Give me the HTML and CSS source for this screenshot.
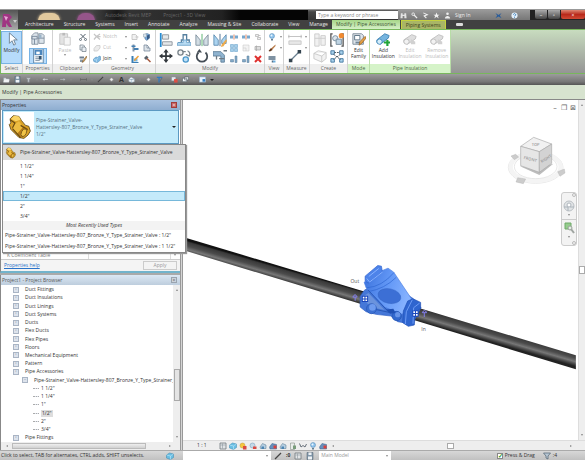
FILE: index.html
```html
<!DOCTYPE html>
<html lang="en">
<head>
<meta charset="utf-8">
<title>Project1 - Modify | Pipe Accessories</title>
<link rel="stylesheet" href="styles.css">
</head>
<body>
<svg class="defs" aria-hidden="true">
<symbol id="cursor" viewBox="0 0 16 16"><path d="M5 1v12l3-3 2 5 2-1-2-5h4z" fill="#fff" stroke="#667b8c"/></symbol>
<symbol id="cats" viewBox="0 0 16 16"><path d="M1 4l3-3h4v13H1zM9 2h4l2 2v9H9z" fill="#dbe3ea" stroke="#8794a0"/><path d="M1 5h6v3H1zM8 7h7M4 8v6" fill="none" stroke="#77889a"/><path d="M9 3h3v4H9z" fill="#9bb3c7"/></symbol>
<symbol id="props" viewBox="0 0 16 16"><path d="M3 0h11v16H3z" fill="#f7fafc" stroke="#5880a4"/><path d="M4 1h9v6H4z" fill="#4b86bd"/><path d="M6 3h4v3H6z" fill="#fff"/><path d="M5 9h7M5 11h7M5 13h5" stroke="#718596"/><path d="M9 8h3v4H9z" fill="#33526e"/></symbol>
<symbol id="paste" viewBox="0 0 16 16"><path d="M2 2h9v12H2z" fill="#e3e3e3" stroke="#c4c4c4"/><path d="M5 1h3v3H5z" fill="#bbb"/><path d="M7 6h7v9H7z" fill="#f5f5f5" stroke="#c8c8c8"/></symbol>
<symbol id="cut" viewBox="0 0 16 16"><path d="M3 2l9 9M13 2L4 11" stroke="#4f5c68" stroke-width="2"/><circle cx="3" cy="13" r="2" fill="none" stroke="#65717b" stroke-width="2"/><circle cx="13" cy="13" r="2" fill="none" stroke="#65717b" stroke-width="2"/></symbol>
<symbol id="copyclip" viewBox="0 0 16 16"><path d="M2 2h7l2 2v8H2z" fill="#e8edf2" stroke="#77838e" stroke-width="1.5"/><path d="M6 6h6l2 2v7H6z" fill="#e8edf2" stroke="#77838e" stroke-width="1.5"/></symbol>
<symbol id="match" viewBox="0 0 16 16"><path d="M1 3h9v4H1z" fill="#6e7f90"/><path d="M2 9h6v5H2z" fill="#8797a5"/><path d="M15 2L8 11l-2 4 4-2 6-9z" fill="#d3a053" stroke="#705530"/></symbol>
<symbol id="notch" viewBox="0 0 16 16"><path d="M2 2l5 5-5 6M14 2L7 7l7 6M9 7h6" fill="none" stroke="#c6c6c6" stroke-width="2.5"/></symbol>
<symbol id="cutgeo" viewBox="0 0 16 16"><path d="M2 9l5-6h7v5l-5 6H2z" fill="#ececec" stroke="#c6c6c6" stroke-width="1.5"/></symbol>
<symbol id="join" viewBox="0 0 16 16"><path d="M1 8l5-4 4 1 2-3 3 1v7l-6 5-6-1-2-2z" fill="#7eb9e2" stroke="#4c88b6"/><path d="M2 9l5 1 3-5M7 10v4" fill="none" stroke="#d5edfb"/></symbol>
<symbol id="cope" viewBox="0 0 16 16"><path d="M2 3h7l3 3v7H2zM9 8h6" fill="#f1f1f1" stroke="#bbb" stroke-width="1.5"/></symbol>
<symbol id="face" viewBox="0 0 16 16"><path d="M3 3l5-2 5 2v7l-5 5-4-3z" fill="#7aaee0" stroke="#46688b"/><path d="M8 5l5-2v7l-5 4z" fill="#375a86"/><path d="M1 2h6v6H1z" fill="#dce7ef" stroke="#8798a9"/></symbol>
<symbol id="beam" viewBox="0 0 16 16"><path d="M3 1h4v14H3z" fill="#8497a9"/><path d="M1 3h8v3H1zM6 8h9v4H6z" fill="#4580b3"/></symbol>
<symbol id="wall" viewBox="0 0 16 16"><path d="M2 2h6v6h6v6H2zM8 2l3 3v3" fill="#dde4ea" stroke="#768798" stroke-width="1.5"/></symbol>
<symbol id="paint" viewBox="0 0 16 16"><path d="M1 2h4v12h10v2H1z" fill="#3c7eb4"/><path d="M5 7h8v6H5z" fill="#79b8e4"/><path d="M14 1L6 9v3l3-1 7-8z" fill="#eda23e"/></symbol>
<symbol id="hammer" viewBox="0 0 16 16"><path d="M2 6l5-5 4 4-5 5z" fill="#59636c"/><path d="M8 7l7 7" stroke="#a65b40" stroke-width="3"/></symbol>
<symbol id="align" viewBox="0 0 16 16"><path d="M2 0v16" stroke="#258bd2" stroke-width="2"/><path d="M4 2h7v5H4zM4 10h11v4H4z" fill="#e4e7e9" stroke="#899199"/></symbol>
<symbol id="offset" viewBox="0 0 16 16"><path d="M1 11h4V8h2V2h4v6h3v3" fill="none" stroke="#57809f" stroke-width="1.5"/><path d="M0 14h16v-3h-5V8H7v3H1z" fill="#b9dcf3" stroke="#6ba2ca"/></symbol>
<symbol id="mirror" viewBox="0 0 16 16"><path d="M1 2l5 6v6H1zM15 2l-5 6v6h5z" fill="#d2dde4" stroke="#7e8f9b"/><path d="M8 1v14" stroke="#49ac62"/></symbol>
<symbol id="mirrordraw" viewBox="0 0 16 16"><path d="M1 2l5 6v6H1zM15 2l-5 6v4h5z" fill="#acd4f0" stroke="#5b8bb0"/><path d="M8 1v14" stroke="#3c668a"/><path d="M15 7l-5 6-1 3 3-1 4-6z" fill="#edaa4b"/></symbol>
<symbol id="move" viewBox="0 0 16 16"><path d="M8 0l3 4H9v3h3V5l4 3-4 3V9H9v3h2l-3 4-3-4h2V9H4v2L0 8l4-3v2h3V4H5z" fill="#33383d"/></symbol>
<symbol id="copy" viewBox="0 0 16 16"><circle cx="4" cy="4" r="3" fill="#f4f4f4" stroke="#7b858c" stroke-width="1.5"/><circle cx="10" cy="12" r="3" fill="#c1e1f6" stroke="#4c98cb" stroke-width="1.5"/><path d="M6 3h4M12 2a4 4 0 012 6l-4-2" fill="none" stroke="#7b858c" stroke-width="1.5"/></symbol>
<symbol id="rotate" viewBox="0 0 16 16"><path d="M4 4a6 6 0 108 0" fill="none" stroke="#444d55" stroke-width="2"/><path d="M2 4h6L5 0z" fill="#444d55"/></symbol>
<symbol id="trim" viewBox="0 0 16 16"><path d="M0 3h9l4 4v8H9V8H0z" fill="#8fb3cf" stroke="#5f7f98"/><path d="M4 8v4M12 2h4M7 11h6" stroke="#6e7a83" stroke-width="1.5"/></symbol>
<symbol id="split" viewBox="0 0 16 16"><path d="M0 5h6v6H0zM10 5h6v6h-6z" fill="#78a8cd"/><path d="M8 3v10" stroke="#db8664" stroke-width="2"/></symbol>
<symbol id="array" viewBox="0 0 16 16"><path d="M1 1h6v6H1zM9 1h6v6H9zM1 9h6v6H1zM9 9h6v6H9z" fill="#a5cee9" stroke="#5c9ac7"/></symbol>
<symbol id="trimone" viewBox="0 0 16 16"><path d="M1 9h6v5H1zM10 2h4v13h-4z" fill="#82a9c7" stroke="#587d9a"/></symbol>
<symbol id="pin" viewBox="0 0 16 16"><path d="M3 3h6v4H3zM7 9h6v4H7zM9 5h4" fill="#eee" stroke="#b4b4b4" stroke-width="1.5"/></symbol>
<symbol id="scale" viewBox="0 0 16 16"><path d="M2 2h12v12H2zM2 8h6v6" fill="#f3f3f3" stroke="#c3c3c3"/></symbol>
<symbol id="unpin" viewBox="0 0 16 16"><path d="M2 5h11v7H2zM5 3v11" fill="#ddd" stroke="#a9a9a9" stroke-width="1.5"/></symbol>
<symbol id="delete" viewBox="0 0 16 16"><path d="M2 2l12 12M14 2L2 14" stroke="#df302e" stroke-width="4"/></symbol>
<symbol id="bulb" viewBox="0 0 16 16"><circle cx="8" cy="6" r="5" fill="#8dc2ec" stroke="#5587ae"/><circle cx="7" cy="5" r="2" fill="#eaf6ff"/><path d="M6 12h4v3H6z" fill="#667f92"/></symbol>
<symbol id="brush" viewBox="0 0 16 16"><path d="M15 1L6 9l2 3 7-8z" fill="#b97c4b"/><path d="M1 14l5-6 3 4-5 3z" fill="#62391e"/></symbol>
<symbol id="lines" viewBox="0 0 16 16"><path d="M1 4h14M1 8h14M9 11v4" stroke="#566f84" stroke-width="3"/><path d="M10 11h5v4h-5z" fill="#6eacd8"/></symbol>
<symbol id="dimension" viewBox="0 0 16 16"><path d="M0 4h16M1 2v4M15 2v4" stroke="#bbb"/><path d="M1 9h14v4H1z" fill="#e8e8e8" stroke="#c7c7c7"/></symbol>
<symbol id="measure" viewBox="0 0 16 16"><path d="M2 14L14 2" stroke="#697f90" stroke-width="1.5"/><path d="M1 11h4v4H1zM11 1h4v4h-4z" fill="#34444f"/></symbol>
<symbol id="part" viewBox="0 0 16 16"><path d="M2 1h5v14H2zM9 3h5v11H9zM2 6h12" fill="#f1f1f1" stroke="#c9c9c9"/></symbol>
<symbol id="assembly" viewBox="0 0 16 16"><path d="M1 5l5-3 9 2v7l-5 4-9-4zM1 5l9 3 5-4M10 8v7" fill="#f2f2f2" stroke="#c7c7c7"/></symbol>
<symbol id="group" viewBox="0 0 16 16"><path d="M3 1H1v14h2M13 1h2v14h-2" fill="none" stroke="#555" stroke-width="1.5"/><circle cx="6" cy="6" r="3" fill="#dce5ec" stroke="#708798"/><path d="M7 7h6v6H7z" fill="#bfd4e3" stroke="#708798"/><circle cx="13" cy="3" r="3" fill="#f08a31"/></symbol>
<symbol id="similar" viewBox="0 0 16 16"><path d="M1 2h4v4H1zM11 2h4v4h-4zM1 11h4v4H1zM11 11h4v4h-4z" fill="#a9d3ee" stroke="#40759d"/><path d="M5 4h6M4 6l8 6M12 6l-8 6" stroke="#3f4a52" stroke-dasharray="2 1"/></symbol>
<symbol id="family" viewBox="0 0 16 16"><path d="M1 2h10l2 2v10H1z" fill="#dfe5ea" stroke="#768694"/><path d="M3 4h6v5H3z" fill="#fff" stroke="#536b7d"/><path d="M4 12h8" stroke="#708798" stroke-width="2"/><path d="M15 5l-6 6-1 4 3-2 5-6z" fill="#e8a345" stroke="#a06c2b"/></symbol>
<symbol id="addins" viewBox="0 0 16 16"><path d="M1 9l9-7 5 2-1 3-9 7-4-2z" fill="#75b4df" stroke="#3f82b2"/><circle cx="4" cy="11" r="3" fill="#d5edfb" stroke="#4489b9"/><path d="M13 9v7M9 12h7" stroke="#23a53a" stroke-width="2.5"/></symbol>
<symbol id="editins" viewBox="0 0 16 16"><path d="M1 9l9-6 5 2-1 3-9 6-4-2z" fill="#dedede" stroke="#bdbdbd"/><circle cx="4" cy="11" r="3" fill="#f2f2f2" stroke="#bbb"/><path d="M9 8l5 3v3H9" fill="#d1d1d1"/></symbol>
<symbol id="dots" viewBox="0 0 16 16"><path d="M2 2h12v12H2z" fill="#e1e4e6" stroke="#6c7378" stroke-width="1.5"/><path d="M3 6h10M7 3v10" stroke="#7e8a93"/></symbol>
<symbol id="open" viewBox="0 0 16 16"><path d="M1 4h5l2 2h6v8H1z" fill="#d5dce1" stroke="#858c92"/><path d="M3 8h12l-2 6H1z" fill="#f0f2f4"/></symbol>
<symbol id="save" viewBox="0 0 16 16"><path d="M2 1h12v14H2z" fill="#8298ab" stroke="#4d5d6b"/><path d="M5 1h6v5H5zM4 9h8v6H4z" fill="#eef2f5"/></symbol>
<symbol id="sync" viewBox="0 0 16 16"><path d="M2 4h12l-4 4v6H6V8z" fill="#c5cace" stroke="#777e84"/></symbol>
<symbol id="undo" viewBox="0 0 16 16"><path d="M6 3L1 8l5 4V9h8V6H6z" fill="#d3d7da" stroke="#777"/></symbol>
<symbol id="redo" viewBox="0 0 16 16"><path d="M10 3l5 5-5 4V9H2V6h8z" fill="#b7bbbf" stroke="#777"/></symbol>
<symbol id="slash" viewBox="0 0 16 16"><path d="M2 14L14 2" stroke="#444" stroke-width="2.5"/></symbol>
<symbol id="dashes" viewBox="0 0 16 16"><path d="M0 8h16M1 5v6M15 5v6" stroke="#666" stroke-width="2"/></symbol>
<symbol id="tag" viewBox="0 0 16 16"><circle cx="8" cy="8" r="4" fill="#eee" stroke="#888" stroke-width="2"/></symbol>
<symbol id="house" viewBox="0 0 16 16"><path d="M1 8l6-6 8 5v6l-6 2-7-2z" fill="#e6edf2" stroke="#778996"/><path d="M8 7v8M2 8l6 0 7-1" stroke="#8cadc8"/></symbol>
<symbol id="thin" viewBox="0 0 16 16"><path d="M2 3h12M7 3v12" stroke="#337bc0" stroke-width="3"/><path d="M14 4L8 14" stroke="#5c6e7e" stroke-width="2"/></symbol>
<symbol id="closehid" viewBox="0 0 16 16"><path d="M1 2h10v9H1z" fill="#e5eaef" stroke="#737c84"/><path d="M7 7h8v8H7z" fill="#dd4e44"/></symbol>
<symbol id="windows" viewBox="0 0 16 16"><path d="M1 5h10v8H1zM6 2h9v7H6z" fill="#f2f4f6" stroke="#56616b" stroke-width="1.5"/></symbol>
<symbol id="ui" viewBox="0 0 16 16"><path d="M1 2h14v12H1z" fill="#e9f2fa" stroke="#82a9cf"/><path d="M8 7h6v6H8z" fill="#377fc2"/></symbol>
<symbol id="cube" viewBox="0 0 16 16"><path d="M1 6l6-4 8 2v7l-6 4-8-3z" fill="#69bfe4" stroke="#3b85ad"/><path d="M1 6l8 2 6-4M9 8v7" fill="none" stroke="#d4effa"/></symbol>
<symbol id="sun" viewBox="0 0 16 16"><circle cx="7" cy="7" r="5" fill="#f7c63e" stroke="#c19a37"/><path d="M8 8h7v7H8z" fill="#d94a42"/></symbol>
<symbol id="shadow" viewBox="0 0 16 16"><circle cx="7" cy="7" r="5" fill="#c4d9e8" stroke="#6e96b5"/><path d="M8 9h7v5H8z" fill="#d94a42"/></symbol>
<symbol id="crop" viewBox="0 0 16 16"><path d="M2 10l5-7 7 3v7H3z" fill="#b5cee1" stroke="#53748e"/><path d="M5 9h5v5H5z" fill="#4c85b2"/></symbol>
<symbol id="cropred" viewBox="0 0 16 16"><path d="M1 10l5-7 9 2v9H2z" fill="#6590bd" stroke="#385f88"/><path d="M9 7h6v6H9z" fill="#d9403c"/></symbol>
<symbol id="lock" viewBox="0 0 16 16"><path d="M3 2h8v13H3z" fill="#e8ece9" stroke="#707b73"/><path d="M8 7h6v7H8z" fill="#789b79"/></symbol>
<symbol id="glasses" viewBox="0 0 16 16"><path d="M1 3l3 7 4-3 4 3 3-6" fill="none" stroke="#666f78" stroke-width="2"/></symbol>
<symbol id="filter" viewBox="0 0 16 16"><path d="M1 2h14l-5 6v6l-4-2V8z" fill="#b7c7d4" stroke="#566775" stroke-width="1.5"/></symbol>
<symbol id="person" viewBox="0 0 16 16"><circle cx="8" cy="4" r="3" fill="#eee"/><path d="M2 15c0-8 12-8 12 0z" fill="#eee"/></symbol>
<symbol id="find" viewBox="0 0 16 16"><path d="M2 3h4v11H1zM10 3h4l1 11h-5zM6 6h4v3H6z" fill="#e3e3e3"/></symbol>
<symbol id="key" viewBox="0 0 16 16"><circle cx="5" cy="5" r="3" fill="none" stroke="#eee" stroke-width="2"/><path d="M7 7l7 7" stroke="#eee" stroke-width="3"/></symbol>
<symbol id="comm" viewBox="0 0 16 16"><path d="M3 2l9 4-7 3 5 5" fill="none" stroke="#eee" stroke-width="2.5"/></symbol>
<symbol id="star" viewBox="0 0 16 16"><path d="M8 1l2 5h5l-4 3 2 6-5-4-5 4 2-6-4-3h5z" fill="#f2f2f2"/></symbol>
<symbol id="exchange" viewBox="0 0 16 16"><path d="M1 2l7 5 7-5-4 6 4 6-7-4-7 4 4-6z" fill="#285c9c"/></symbol>
<symbol id="help" viewBox="0 0 16 16"><circle cx="8" cy="8" r="7" fill="#e4f0fa"/><path d="M5 6q3-5 6 0l-3 4M8 12v2" fill="none" stroke="#3278b4" stroke-width="2"/></symbol>
<symbol id="valve" viewBox="0 0 30 32"><path d="M4 6l4-4 7 1 3 5 5 6 4 1 2 6-3 5-5 4-6-1-5-5-5-5-2-6 2-2z" fill="#dba328" stroke="#5a4212"/><path d="M5 6l6 3 6-2-2-4-6-1z" fill="#f8d467"/><path d="M7 14l8-5 5 7-7 8-5-4z" fill="#edbd42"/><path d="M13 24l8-9 5 3-8 11z" fill="#b77d19"/><path d="M4 7l6 4-3 6M17 14l8 5-6 9M7 18l10 11" fill="none" stroke="#6a4b12" stroke-width="1.5"/><ellipse cx="21" cy="23" rx="3" ry="5" transform="rotate(25 21 23)" fill="#f1c447" stroke="#7b5919"/></symbol>
</svg>

<header class="titlebar">
  <div class="glass"><i class="blob cream"></i><i class="blob plum"></i><span>Autodesk Revit MEP</span><span>Project1 - 3D View</span></div>
  <input class="search" type="search" aria-label="Search help" placeholder="Type a keyword or phrase">
  <div class="account">
    <svg><use href="#find"/></svg><svg><use href="#key"/></svg><svg><use href="#comm"/></svg><svg><use href="#star"/></svg><svg><use href="#person"/></svg>
    <a href="#">Sign In</a>
    <span class="exchange"><i class="caret"></i><svg><use href="#exchange"/></svg><svg><use href="#help"/></svg></span>
  </div>
  <div class="wincontrols"><button aria-label="Minimize">–</button><button aria-label="Maximize">▫</button><button class="close" aria-label="Close">×</button></div>
</header>

<nav class="tabs">
  <button class="app" aria-label="Application menu"><svg viewBox="0 0 18 19"><path d="M3 3h6l3 3-3 4 3 6H9l-3-4v4H2z" fill="#a03583"/><path d="M4 5l4 1-2 4z" fill="#e7a4d5"/><path d="M13 9h4l-2 3z" fill="#ccc"/></svg></button>
  <a href="#">Architecture</a><a href="#">Structure</a><a href="#">Systems</a><a href="#">Insert</a><a href="#">Annotate</a><a href="#">Analyze</a><a href="#">Massing &amp; Site</a><a href="#">Collaborate</a><a href="#">View</a><a href="#">Manage</a>
  <a class="active" href="#">Modify | Pipe Accessories</a><a class="context" href="#">Piping Systems</a>
  <button class="collapse" aria-label="Minimize ribbon"></button>
</nav>

<section class="ribbon">
  <div class="panel"><div class="tools"><button class="big chosen"><svg><use href="#cursor"/></svg>Modify</button></div><h2>Select</h2></div>
  <div class="panel"><div class="tools stack"><button aria-label="Type properties"><svg><use href="#cats"/></svg></button><button class="chosen" aria-label="Properties"><svg><use href="#props"/></svg></button></div><h2>Properties</h2></div>
  <div class="panel"><div class="tools"><button class="big off"><svg><use href="#paste"/></svg>Paste<i class="caret"></i></button>
    <div class="small one"><svg><use href="#cut"/></svg><svg><use href="#copyclip"/></svg><svg><use href="#match"/></svg></div></div><h2>Clipboard</h2></div>
  <div class="panel"><div class="tools"><div class="labelled">
      <button class="off"><svg><use href="#notch"/></svg><span>Notch</span><i class="caret"></i></button>
      <button class="off"><svg><use href="#cutgeo"/></svg><span>Cut</span><i class="caret"></i></button>
      <button><svg><use href="#join"/></svg><span>Join</span><i class="caret"></i></button></div>
    <div class="small two"><svg><use href="#cope"/></svg><svg><use href="#face"/></svg><svg><use href="#beam"/></svg><svg><use href="#wall"/></svg><svg><use href="#paint"/></svg><svg><use href="#hammer"/></svg></div></div><h2>Geometry</h2></div>
  <div class="panel"><div class="tools"><div class="large four">
      <svg><use href="#align"/></svg><svg><use href="#offset"/></svg><svg><use href="#mirror"/></svg><svg><use href="#mirrordraw"/></svg>
      <svg><use href="#move"/></svg><svg><use href="#copy"/></svg><svg><use href="#rotate"/></svg><svg><use href="#trim"/></svg></div>
    <div class="small three"><svg><use href="#split"/></svg><svg><use href="#split"/></svg><svg><use href="#pin"/></svg><svg><use href="#array"/></svg><svg><use href="#scale"/></svg><svg><use href="#unpin"/></svg><svg><use href="#trimone"/></svg><svg><use href="#trimone"/></svg><svg><use href="#delete"/></svg></div></div><h2>Modify</h2></div>
  <div class="panel"><div class="tools"><div class="small one"><svg><use href="#bulb"/></svg><svg><use href="#brush"/></svg><svg><use href="#lines"/></svg></div><div class="carets"><i class="caret"></i><i class="caret"></i></div></div><h2>View</h2></div>
  <div class="panel"><div class="tools"><div class="large"><svg><use href="#dimension"/></svg><svg><use href="#measure"/></svg></div><div class="carets"><i class="caret"></i><i class="caret"></i></div></div><h2>Measure</h2></div>
  <div class="panel"><div class="tools"><div class="large pair"><svg><use href="#part"/></svg><svg><use href="#group"/></svg><svg><use href="#assembly"/></svg><svg><use href="#similar"/></svg></div></div><h2>Create</h2></div>
  <div class="panel green"><div class="tools"><button class="big"><svg><use href="#family"/></svg>Edit<br>Family</button></div><h2>Mode</h2></div>
  <div class="panel green"><div class="tools"><button class="big"><svg><use href="#addins"/></svg>Add<br>Insulation</button><button class="big off"><svg><use href="#editins"/></svg>Edit<br>Insulation</button><button class="big off"><svg><use href="#editins"/></svg>Remove<br>Insulation</button></div><h2>Pipe Insulation</h2></div>
</section>

<div class="quick">
  <svg><use href="#open"/></svg><svg><use href="#save"/></svg><svg><use href="#sync"/></svg><i class="caret"></i><svg><use href="#undo"/></svg><i class="caret"></i><svg><use href="#redo"/></svg><i class="caret"></i><svg class="apart"><use href="#dashes"/></svg><i class="caret"></i><svg><use href="#slash"/></svg><svg><use href="#tag"/></svg><b>A</b><svg><use href="#house"/></svg><i class="caret"></i><svg><use href="#tag"/></svg><svg><use href="#thin"/></svg><svg class="apart"><use href="#closehid"/></svg><svg><use href="#windows"/></svg><i class="caret"></i><svg><use href="#ui"/></svg><i class="caret dark"></i>
</div>
<div class="options">Modify | Pipe Accessories</div>

<main>
  <aside>
    <section class="properties">
      <h2 class="caption">Properties<button class="x" aria-label="Close properties">×</button></h2>
      <button class="type" aria-haspopup="listbox"><svg><use href="#valve"/></svg><span>Pipe-Strainer_Valve-<br>Hattersley-807_Bronze_Y_Type_Strainer_Valve<br>1/2"</span><i class="caret dark"></i></button>
      <div class="menu">
        <h3><svg><use href="#valve"/></svg>Pipe-Strainer_Valve-Hattersley-807_Bronze_Y_Type_Strainer_Valve</h3>
        <ul role="listbox" aria-label="Type"><li role="option">1 1/2"</li><li role="option">1 1/4"</li><li role="option">1"</li><li role="option" aria-selected="true">1/2"</li><li role="option">2"</li><li role="option">3/4"</li></ul>
        <h4>Most Recently Used Types</h4>
        <p>Pipe-Strainer_Valve-Hattersley-807_Bronze_Y_Type_Strainer_Valve : 1/2"</p>
        <p>Pipe-Strainer_Valve-Hattersley-807_Bronze_Y_Type_Strainer_Valve : 1 1/2"</p>
      </div>
      <div class="params"><span>K Coefficient Table</span><span></span><i class="caret"></i></div>
      <div class="foot"><a href="#">Properties help</a><button>Apply</button></div>
    </section>
    <section class="browser">
      <h2 class="caption">Project1 - Project Browser<button class="x plain" aria-label="Close browser">×</button></h2>
      <div class="treewrap">
        <ul class="tree">
          <li>Duct Fittings</li><li>Duct Insulations</li><li>Duct Linings</li><li>Duct Systems</li><li>Ducts</li><li>Flex Ducts</li><li>Flex Pipes</li><li>Floors</li><li>Mechanical Equipment</li><li>Pattern</li><li>Pipe Accessories</li>
          <li class="child">Pipe-Strainer_Valve-Hattersley-807_Bronze_Y_Type_Strainer_Valve</li>
          <li class="leaf">1 1/2"</li><li class="leaf">1 1/4"</li><li class="leaf">1"</li><li class="leaf"><mark>1/2"</mark></li><li class="leaf">2"</li><li class="leaf">3/4"</li><li>Pipe Fittings</li>
        </ul>
        <div class="vbar"><i class="caret up"></i><i class="thumb"></i><i class="caret"></i></div>
      </div>
      <div class="hbar"><i class="caret left"></i><i class="thumb"></i><i class="caret right"></i></div>
    </section>
  </aside>
  <div class="splitter"></div>
  <section class="view">
    <div class="canvas">
      <svg class="model" viewBox="183 99 395 341" preserveAspectRatio="xMinYMin meet" role="img" aria-label="Pipe with strainer valve">
        <defs>
          <linearGradient id="pipe" gradientUnits="userSpaceOnUse" x1="380" y1="295.6" x2="376.3" y2="308.4"><stop offset="0" stop-color="#111"/><stop offset=".12" stop-color="#3a3a3a"/><stop offset=".4" stop-color="#4c4c4c"/><stop offset=".65" stop-color="#777"/><stop offset=".85" stop-color="#444"/><stop offset="1" stop-color="#222"/></linearGradient>
          <linearGradient id="blue" x1="0" y1="0" x2="1" y2=".3"><stop offset="0" stop-color="#3970db"/><stop offset=".55" stop-color="#6398f6"/><stop offset="1" stop-color="#86b2ff"/></linearGradient>
        </defs>
        <path d="M183 236.3L577 355v14L183 249.5z" fill="url(#pipe)"/>
        <g transform="translate(330 250) scale(.3333)" stroke-linejoin="round">
          <path d="M104 120l-12 18v32l18 14 30 8 45 5 20 17 24 4 26-8 20-38-24-28-90-60z" fill="#4577d8" stroke="#2d5ec4" stroke-width="2"/>
          <path d="M110 112L104 95l48-32 24-10 17 12 58 87-32 40-54-22z" fill="url(#blue)" stroke="#4a7de2" stroke-width="2"/>
          <path d="M107 77l38-32 11 2 3 17-43 34-9-7z" fill="#4d83e9" stroke="#2d62ce" stroke-width="2"/>
          <path d="M118 78l30-24M120 95l40-31M112 84l8 10" fill="none" stroke="#88b2ff" stroke-width="3"/>
          <path d="M112 112q45-3 81-45M119 123q46-8 81-42" fill="none" stroke="#2e65d0" stroke-width="2"/>
          <ellipse cx="180" cy="137" rx="35" ry="22" transform="rotate(12 180 137)" fill="#3c6fd5" stroke="#315fbd"/>
          <path d="M117 128l49 51-43-9-25-30z" fill="#6b93dd"/><path d="M116 119l63 67-46-10" fill="none" stroke="#2857b5" stroke-width="3"/>
          <path d="M235 152l16-7 23 11v18l-16 12-3 38-18 4-17-11 2-35z" fill="#2f65cf" stroke="#1e4eb5" stroke-width="2"/>
          <path d="M249 148l-18 36-3 37M271 158l-18 14-2 48" fill="none" stroke="#6c9bf4" stroke-width="3"/>
          <circle cx="126" cy="175" r="15" fill="#3c70d2" stroke="#2554b5" stroke-width="2"/><circle cx="129" cy="171" r="10" fill="#6e9bef"/>
          <circle cx="202" cy="197" r="14" fill="#3369ce" stroke="#1f50af" stroke-width="2"/><circle cx="205" cy="193" r="8" fill="#6794e8"/>
          <path d="M170 177l22-2 6 13-16 2z" fill="#2051b5"/>
          <g fill="#1946bc"><path d="M97 136h19v19H97zM249 180h19v19h-19z"/></g>
          <path d="M100 139h5v5h-5zM108 139h5v5h-5zM100 147h5v5h-5zM108 147h5v5h-5zM252 183h5v5h-5zM260 183h5v5h-5zM252 191h5v5h-5zM260 191h5v5h-5z" fill="#fff"/>
          <path d="M70 140q7-14 13 0zM77 140v11M279 187q7-14 13 0zM285 187v13" fill="none" stroke="#8580ee" stroke-width="3"/>
        </g>
        <text x="351" y="283">Out</text><text x="422" y="331">In</text>
      </svg>
      <div class="mdi"><button aria-label="Minimize view">–</button><button aria-label="Restore view">❐</button><button aria-label="Close view">⊠</button></div>
      <svg class="viewcube" viewBox="60 115 189 159" role="img" aria-label="View cube">
        <ellipse cx="152" cy="215" rx="82" ry="48" fill="none" stroke="#ddd" stroke-width="2"/><ellipse cx="152" cy="214" rx="75" ry="42" fill="none" stroke="#f4f4f4" stroke-width="13"/><ellipse cx="152" cy="213" rx="64" ry="36" fill="none" stroke="#ddd" stroke-width="2"/>
        <path d="M78 181l14-5 9 8-13 8zM98 246l24 4-7 14-22-5zM218 228l20-8 2 12-15 10z" fill="#ccc" stroke="#aaa"/>
        <path d="M105 212l58 26 42-34-45 10z" fill="#bcbcbc"/>
        <path d="M107 152l39-27 54 20-37 23z" fill="#f1f1f1" stroke="#aaa" stroke-width="2"/><path d="M107 152l56 16v62l-56-20z" fill="#e6e6e6" stroke="#aaa" stroke-width="2"/><path d="M163 168l37-23v58l-37 27z" fill="#d3d3d3" stroke="#aaa" stroke-width="2"/>
        <text x="140" y="152">TOP</text><text x="116" y="194" transform="rotate(14 135 190)">FRONT</text><text x="166" y="194" transform="rotate(-32 182 190)">RIGHT</text>
      </svg>
      <div class="navbar">
        <i class="dot"></i><button aria-label="Steering wheel"><svg viewBox="0 0 12 12"><circle cx="6" cy="6" r="5" fill="#e1e4e6" stroke="#bbc0c4"/><circle cx="6" cy="5" r="2" fill="#fff" stroke="#aeb6bc"/><path d="M1 7h4v4M11 7H7" fill="none" stroke="#aab3ba"/></svg><i class="caret"></i></button>
        <button aria-label="Zoom"><svg viewBox="0 0 12 12"><path d="M2 1h6v6H2z" fill="#95cc8d" stroke="#6eaa68"/><circle cx="7" cy="6" r="2" fill="#e5eee5" stroke="#9aa39b"/><path d="M8 7l3 4" stroke="#9fa5a1" stroke-width="2"/></svg><i class="caret"></i></button><i class="dot"></i>
      </div>
    </div>
    <div class="vbar"><i class="caret up"></i><i class="thumb"></i><i class="caret"></i></div>
    <div class="viewbar"><span>1 : 1</span><svg><use href="#dots"/></svg><svg><use href="#cube"/></svg><svg><use href="#sun"/></svg><svg><use href="#shadow"/></svg><svg><use href="#crop"/></svg><svg><use href="#cropred"/></svg><svg><use href="#crop"/></svg><svg><use href="#lock"/></svg><svg><use href="#glasses"/></svg><svg><use href="#bulb"/></svg><svg><use href="#cropred"/></svg><i class="caret left"></i><div class="track"><i class="thumb"></i></div><i class="caret right"></i></div>
  </section>
</main>

<footer>
  <span class="hint">Click to select, TAB for alternates, CTRL adds, SHIFT unselects.</span>
  <svg><use href="#cube"/></svg>
  <div class="drop workset"><select aria-label="Workset"><option></option></select><i class="caret"></i></div>
  <div class="icons"><svg><use href="#slash"/></svg><b>:0</b><svg><use href="#dots"/></svg><svg><use href="#save"/></svg></div>
  <div class="drop design"><select aria-label="Design option"><option>Main Model</option></select><i class="caret"></i></div>
  <div class="drag"><input id="drag" type="checkbox" checked><label for="drag">Press &amp; Drag</label><svg><use href="#filter"/></svg><span>:4</span></div>
</footer>
</body>
</html>
```
FILE: styles.css
```css
* { box-sizing: border-box; margin: 0; }
body {
  display: flex; flex-direction: column; height: 100vh; padding: 9px 0 11px;
  background: #fff; color: #333; overflow: hidden;
  font: 5px/7px "Open Sans", "Noto Sans", sans-serif;
}
button, input, select { font: inherit; color: inherit; border: 0; padding: 0; background: none; border-radius: 0; }
a { color: inherit; text-decoration: none; }
h2, h3, h4 { font: inherit; }
ul { list-style: none; padding: 0; }
.defs { position: absolute; width: 0; height: 0; }
svg { display: block; width: 8px; height: 8px; flex: none; }
.caret { width: 0; height: 0; flex: none; border: 1px solid transparent; border-top: 2px solid #888; border-bottom: 0; }
.caret.dark { border-top-color: #222; border-left-width: 2px; border-right-width: 2px; }
.caret.up { transform: rotate(180deg); }
.caret.left { transform: rotate(90deg); }
.caret.right { transform: rotate(-90deg); }

.titlebar { display: flex; height: 11px; flex: none; background: linear-gradient(#666, #444 20%, #333); border-top: 1px solid #999; }
.glass { display: flex; flex: 286 1 0; align-items: center; padding-left: 22px; color: #666; background: linear-gradient(90deg, #444 30%, #191919 38%, #333 42%, #222 72%, #050505 78%); overflow: hidden; white-space: nowrap; }
.glass span { margin-right: 12px; }
.blob { width: 22px; height: 8px; margin: 3px 7px 0 16px; border-radius: 8px 8px 0 0; background: #e2c99d; box-shadow: 0 0 3px #e2c99d; }
.blob.plum { width: 18px; margin: 3px 10px 0; background: #95558a; box-shadow: 0 0 3px #95558a; }
.search { flex: 78 1 0; height: 8px; margin: 1px 0 0 8px; padding: 0 2px; background: #fff; min-width: 0; appearance: none; }
.search::placeholder { color: #888; opacity: 1; }
.account { display: flex; flex: 130 1 0; align-items: center; gap: 4px; padding-left: 2px; background: linear-gradient(#999, #777); color: #eee; }
.account svg { width: 7px; height: 7px; }
.exchange { display: flex; align-items: center; gap: 9px; margin: 0 12px 0 auto; }
.wincontrols { display: flex; flex: 50 1 0; gap: 1px; padding-left: 5px; background: #222; }
.wincontrols button { flex: 1; height: 9px; line-height: 8px; color: #fff; background: linear-gradient(#aaa, #444); border-radius: 0 0 2px 2px; }
.wincontrols .close { flex: 2; background: linear-gradient(#dc8874, #b8291a 50%, #cf4934); }

.tabs { display: flex; height: 10px; flex: none; align-items: stretch; gap: 10px; padding-right: 8px; background: #414141; color: #e6e6e6; line-height: 9px; border-bottom: 1px solid #78b75c; white-space: nowrap; }
.app { width: 18px; height: 20px; margin: -10px -3px 0 0; background: linear-gradient(#555, #aaa); z-index: 1; flex: none; }
.app svg { width: 18px; height: 19px; }
.tabs .active { margin-left: -6px; padding: 0 4px; background: linear-gradient(#a7d789, #d5f0c7); color: #3c5232; }
.tabs .context { margin-left: -9px; padding: 0 4px; background: #a9b566; color: #3c4320; border: 1px solid #c5d23e; border-bottom: 0; line-height: 8px; }
.collapse { width: 7px; height: 3px; margin: 3px 0; border-radius: 1px; background: #ddd; }

.ribbon { display: grid; grid-template-columns: 22px 30px 37px 66px 109px 19px 26px 38px 22px 81px; flex: none; height: 44px; border: 1px solid #78b75c; border-width: 0 0 1px 1px; background: linear-gradient(#c8dcbf, #959595); }
.panel { display: flex; flex-direction: column; border-right: 1px solid #d2d2d2; background: #fff; min-width: 0; }
.panel h2 { height: 9px; line-height: 9px; text-align: center; color: #666; background: #efefef; white-space: nowrap; }
.panel.green { border-color: #b8dda7; }
.panel.green h2 { background: #d5f3c8; color: #4d6645; }
.tools { display: flex; flex: 1; padding-top: 1px; justify-content: center; min-height: 0; }
.ribbon button { display: flex; align-items: center; }
.ribbon .big { flex: 1; flex-direction: column; gap: 1px; padding-top: 1px; line-height: 6px; min-width: 0; }
.big svg, .stack svg, .large svg { width: 14px; height: 14px; }
.ribbon .chosen { background: #b6dbfb; outline: 1px solid #78b3e4; outline-offset: -1px; }
.ribbon .off { color: #bbb; }
.stack { flex-direction: column; align-items: center; gap: 1px; }
.stack button { width: 18px; height: 16px; justify-content: center; }
.small { display: grid; grid-template-columns: 11px; grid-template-rows: repeat(3, 11px); place-items: center; }
.small.one { margin-right: 1px; }
.small.two, .small.three { column-gap: 1px; }
.small.two { grid-template-columns: 11px 11px; }
.small.three { grid-template-columns: repeat(3, 11px); }
.labelled { display: grid; grid-template-rows: repeat(3, 11px); width: 34px; margin-right: 2px; }
.labelled button { gap: 2px; }
.labelled span { flex: 1; text-align: left; }
.large { display: grid; grid-template-columns: 16px; grid-template-rows: 17px 16px; place-items: center; }
.large.four { grid-template-columns: repeat(4, 18px); }
.large.pair { grid-template-columns: 17px 17px; }
.carets { display: flex; flex-direction: column; gap: 9px; padding: 5px 0 0 2px; }

.quick { display: flex; flex: none; height: 11px; align-items: center; gap: 4px; padding: 0 3px; background: linear-gradient(#9c9c9c, #777 70%, #555); }
.quick svg { width: 7px; height: 7px; }
.quick .apart { margin-left: 4px; }
.quick b { color: #333; font-size: 7px; }
.options { height: 15px; flex: none; padding-left: 2px; line-height: 14px; background: #d7e3cf; border-bottom: 1px solid #888; }

main { display: grid; grid-template-columns: 180px 3px 1fr; flex: 1; min-height: 0; }
aside { display: grid; grid-template: 176fr 175fr / minmax(0, 1fr); min-width: 0; min-height: 0; background: #aaa; }
.caption { display: flex; height: 10px; flex: none; align-items: center; justify-content: space-between; padding: 0 3px 0 1px; background: linear-gradient(#a9c2df, #8faed0); }
.browser .caption { background: linear-gradient(#dce8f4, #bdcddd); color: #555; }
.x { width: 6px; height: 6px; line-height: 4px; color: #fff; background: #c76565; }
.caption .x { border: 1px solid #a13c3c; }
.caption .x.plain { color: #555; background: #ccd4dc; border-color: #9aa4af; }
.properties, .browser { display: flex; flex-direction: column; min-height: 0; border-left: 1px solid #888; background: #fff; }
.properties { position: relative; margin-bottom: 2px; border-bottom: 2px solid #72b4cc; }
.type { display: flex; align-items: center; gap: 2px; height: 34px; flex: none; margin: 0 1px; text-align: left; }
.properties .type { padding: 1px 2px 1px 1px; color: #567080; background: #c3ebfb; border: 1px solid #5b99c2; }
.type svg { width: 30px; height: 30px; padding: 2px; background: #fff; }
.type span { flex: 1; white-space: nowrap; }
.menu { position: absolute; z-index: 2; top: 44px; left: 1px; width: 184px; background: #fff; border: 1px solid #888; box-shadow: 1px 1px 1px #999; white-space: nowrap; }
.menu h3 { display: flex; height: 15px; align-items: center; gap: 4px; padding-left: 2px; background: #dadada; }
.menu h3 svg { width: 11px; height: 12px; }
.menu ul { padding-top: 1px; }
.menu li { height: 10px; padding-left: 17px; line-height: 10px; }
.menu [aria-selected] { line-height: 8px; padding-left: 16px; background: #c4eafa; border: 1px solid #76b8da; }
.menu h4 { height: 9px; line-height: 9px; text-align: center; font-style: italic; background: #f3f3f3; }
.menu p { height: 11px; padding-left: 2px; line-height: 11px; }
.params { display: flex; flex: 1; align-items: end; padding: 0 4px 0 6px; color: #777; border-bottom: 1px solid #ccc; }
.params span { flex: 1; border-right: 1px solid #ddd; height: 7px; }
.params .caret { margin: 0 0 3px 3px; }
.foot { display: flex; height: 11px; flex: none; align-items: center; justify-content: space-between; padding: 0 3px; background: #f4f4f4; }
.foot a { color: #2a73c9; text-decoration: underline; }
.foot button { width: 34px; height: 9px; color: #999; border: 1px solid #ccc; line-height: 7px; }

.treewrap { display: flex; flex: 1; min-height: 0; }
.tree { display: flex; flex-direction: column; flex: 1; min-width: 0; padding-left: 12px; overflow: hidden; }
.tree li { display: flex; flex: 1; align-items: center; min-height: 0; white-space: nowrap; overflow: hidden; }
.tree li::before { content: "+"; width: 4px; height: 4px; margin-right: 6px; flex: none; color: #567; background: #dde3ec; border: 1px solid #a9b4c4; line-height: 2px; font-size: 4px; text-align: center; }
.tree .child { padding-left: 9px; }
.tree .child::before { content: "–"; }
.tree .leaf { padding-left: 20px; }
.tree .leaf::before { content: ""; width: 6px; height: 0; margin-right: 2px; border-width: 1px 0 0; border-style: dotted; border-color: #aaa; }
mark { background: #ddd; color: inherit; padding: 0 1px; }
.vbar { display: flex; flex-direction: column; align-items: center; width: 7px; padding: 4px 0; background: #eee; }
.vbar .thumb { flex: none; width: 6px; height: 32px; margin: auto 0 35px; background: #e4e4e4; border: 1px solid #aaa; }
.hbar { display: flex; height: 8px; flex: none; align-items: center; padding: 0 9px 0 5px; gap: 4px; background: #eee; }
.hbar .thumb { width: 134px; height: 6px; margin-right: auto; background: linear-gradient(#eee, #d0d0d0); border: 1px solid #bbb; }
.splitter { background: #d5d5d5; border: 1px solid #999; border-width: 0 1px; }

.view { display: grid; grid-template: 1fr 10px / 1fr 7px; min-height: 0; min-width: 0; }
.canvas { position: relative; min-height: 0; background: #fff; overflow: hidden; }
.model { position: absolute; inset: 0; width: 100%; height: 100%; fill: #555; }
.viewcube { position: absolute; top: 34px; right: 10px; width: 63px; height: 53px; font-size: 12px; font-weight: 600; fill: #999; }
.mdi { position: absolute; top: 4px; right: 2px; display: flex; gap: 3px; color: #666; }
.mdi button { width: 6px; height: 7px; line-height: 6px; font-size: 7px; }
.navbar { position: absolute; top: 92px; right: 1px; width: 16px; height: 54px; display: flex; flex-direction: column; align-items: center; justify-content: space-between; background: #f3f3f3; border: 1px solid #ccc; border-radius: 3px; }
.navbar button { display: flex; flex-direction: column; align-items: center; gap: 2px; }
.navbar svg { width: 12px; height: 12px; }
.navbar button + button { width: 100%; border-top: 1px solid #ccc; padding-top: 2px; }
.dot { width: 4px; height: 4px; margin-left: auto; border: 1px solid #bbb; border-radius: 50%; }
.view > .vbar .thumb { height: 8px; margin: auto 0; background: #fff; }
.view > .vbar { border-left: 1px solid #ddd; }
.viewbar { display: flex; grid-column: 1 / -1; align-items: center; gap: 2px; padding: 0 10px 0 14px; background: #eee; border-top: 1px solid #ddd; }
.viewbar span { width: 20px; }
.viewbar .caret { margin: 0 3px; }
.track { flex: 1; }
.track .thumb { display: block; width: 7px; height: 6px; margin-left: 48%; background: #fff; border: 1px solid #aaa; }

footer { display: flex; height: 10px; flex: none; align-items: center; background: linear-gradient(#d7d7d7, #c1c1c1); border-top: 1px solid #aaa; white-space: nowrap; }
.hint { width: 166px; padding-left: 1px; }
.drop { display: flex; align-items: center; height: 9px; padding: 0 3px 0 2px; background: #fff; color: #999; }
.drop select { flex: 1; min-width: 0; height: 9px; appearance: none; }
.workset { width: 88px; margin-left: 9px; }
.icons { display: flex; align-items: center; gap: 4px; margin-left: 3px; }
.design { width: 72px; margin-left: 5px; }
.drag { display: flex; align-items: center; gap: 2px; margin: 0 28px 0 auto; }
.drag input { width: 6px; height: 6px; appearance: none; background: #fff; border: 1px solid #888; }
.drag input:checked::before { content: "✓"; display: block; color: #259b27; font-weight: 700; font-size: 6px; line-height: 4px; }
.drag svg { margin-left: 6px; }
```
